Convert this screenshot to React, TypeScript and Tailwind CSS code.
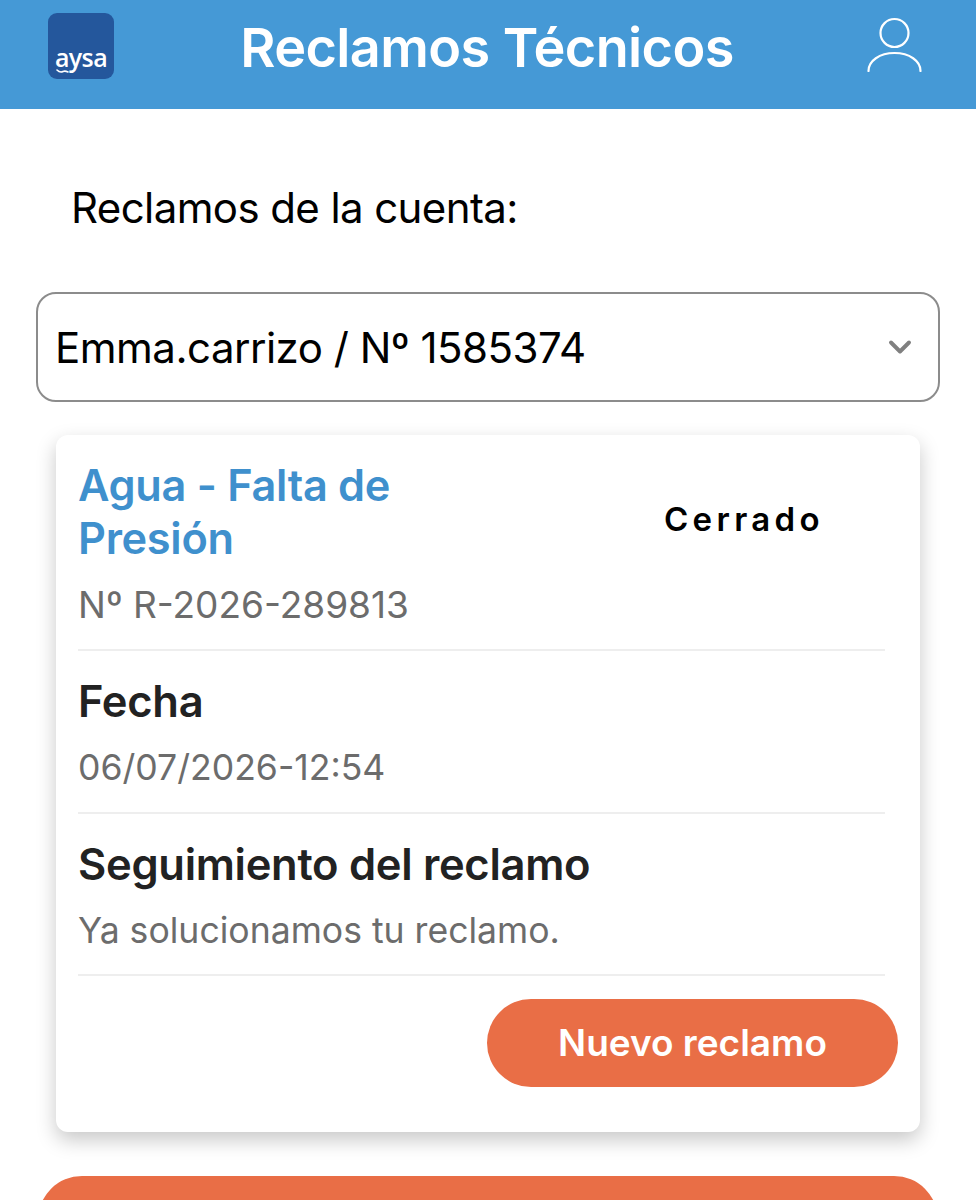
import { ChevronDown } from 'lucide-react';

function Logo() {
  return (
    <div className="relative -mt-[17px] flex h-[66px] w-[66px] flex-shrink-0 items-end justify-center rounded-[9px] bg-[#24579c] pb-[7px]">
      <span className="font-['Open_Sans',sans-serif] text-[25px] font-semibold leading-[30px] tracking-[-0.6px] text-white">aysa</span>
      {/* little wave below the first a */}
      <svg className="absolute bottom-[5px] left-[8px]" width="13" height="6" viewBox="0 0 13 6" fill="none">
        <path d="M1 2c2 2 4 2.500 6 1.500S10 3 12 4" stroke="#fff" strokeWidth="1.600" strokeLinecap="round" />
      </svg>
    </div>
  );
}

function UserIcon() {
  return (
    <svg className="-mt-[21px]" width="56" height="56" viewBox="0 0 56 56" fill="none" stroke="#fff" strokeWidth="2.200" strokeLinecap="round">
      <circle cx="27.500" cy="17" r="14" />
      <path d="M1.500 55c0-10 11-18 26-18s26 8 26 18" />
    </svg>
  );
}

function Section({ title, value }: { title: string; value: string }) {
  return (
    <div className="border-b-2 border-[#eeeeee] pb-[22.500px] pt-[27px]">
      <p className="text-[43.500px] font-semibold leading-[47px] tracking-[-0.3px] text-[#222222]">{title}</p>
      <p className="mt-[22px] text-[35.600px] leading-[42px] text-[#6c6c6c]">{value}</p>
    </div>
  );
}

export default function App() {
  return (
    <div className="h-[1200px] overflow-hidden bg-white font-['Inter',sans-serif]">
      <header className="flex h-[109px] items-center justify-between bg-[#4599d6] pl-[48px] pr-[53px]">
        <Logo />
        <h1 className="-mt-[13px] mr-[7px] text-[54px] font-semibold leading-none tracking-[-0.6px] text-white">Reclamos Técnicos</h1>
        <UserIcon />
      </header>

      <p className="pl-[71px] pt-[74px] text-[42px] leading-[50px] tracking-[-0.6px] text-black">Reclamos de la cuenta:</p>

      <div className="mx-[36px] mt-[59px] flex h-[110px] items-center justify-between rounded-[20px] border-2 border-[#8c8c8c] pl-[17px] pr-[20px]">
        <span className="text-[42px] tracking-[-0.5px] text-black">Emma.carrizo / Nº 1585374</span>
        <ChevronDown size={36} strokeWidth={2.600} className="text-[#808080]" />
      </div>

      <div className="mx-[56px] mt-[33px] h-[697px] rounded-[12px] bg-white pl-[22px] pr-[35px] pt-[24px] shadow-[0_8px_20px_rgba(0,0,0,0.22)]">
        <div className="border-b-2 border-[#eeeeee] pb-[23px]">
          <div className="flex items-center">
            <h2 className="w-[400px] text-[43.300px] font-semibold leading-[53px] tracking-[-0.3px] text-[#3f90cd]">
              Agua - Falta de Presión
            </h2>
            <span className="ml-[186px] mt-[16px] text-[33px] font-semibold tracking-[4.300px] text-black">Cerrado</span>
          </div>
          <p className="mt-[19px] text-[37px] leading-[42px] text-[#6c6c6c]">Nº R-2026-289813</p>
        </div>
        <Section title="Fecha" value="06/07/2026-12:54" />
        <Section title="Seguimiento del reclamo" value="Ya solucionamos tu reclamo." />
        <div className="mr-[-13px] mt-[23px] flex justify-end">
          <button className="h-[88px] w-[411px] rounded-[44px] bg-[#e96e46] text-[37px] font-semibold text-white">
            Nuevo reclamo
          </button>
        </div>
      </div>

      <div className="mx-[38px] mt-[44px] h-[120px] rounded-[44px] bg-[#e96e46]" />
    </div>
  );
}
